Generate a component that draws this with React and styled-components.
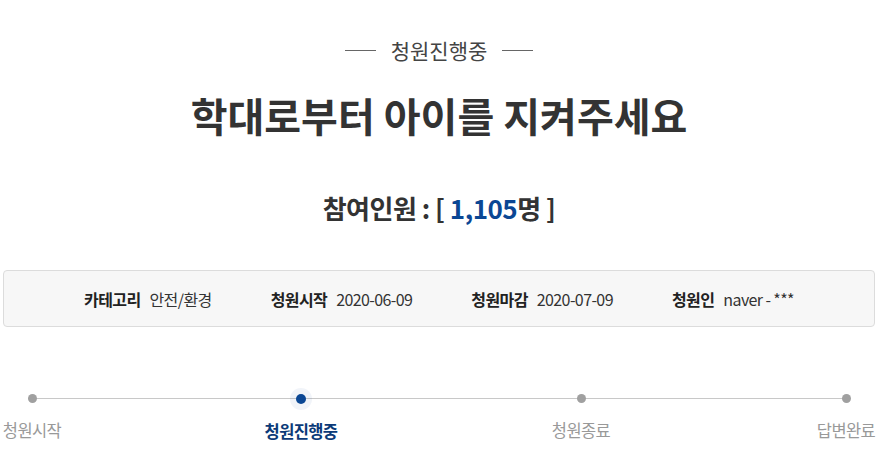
import styled, { createGlobalStyle } from "styled-components";

const GlobalStyle = createGlobalStyle`
  body {
    margin: 0;
    background: #fff;
    font-family: "Noto Sans CJK KR", "Noto Sans", sans-serif;
    color: #333;
  }
`;

const Page = styled.div`
  width: 872px;
  margin-left: 3px;
  padding-top: 32px;
`;

const Status = styled.div`
  display: flex;
  align-items: center;
  justify-content: center;
  gap: 15px;
  font-size: 21px;
  line-height: 36px;
  color: #444;

  &::before,
  &::after {
    content: "";
    width: 31px;
    height: 1px;
    background: #666;
  }
`;

const Title = styled.h1`
  margin: 19px 0 0;
  text-align: center;
  font-size: 40px;
  line-height: 56px;
  font-weight: 700;
  color: #333;
`;

const Count = styled.div`
  margin-top: 47px;
  text-align: center;
  font-size: 26px;
  line-height: 36px;
  font-weight: 700;
  color: #333;
  letter-spacing: -0.5px;
`;

const Num = styled.span`
  color: #0b4794;
`;

const InfoBox = styled.div`
  margin-top: 44px;
  height: 55px;
  display: flex;
  align-items: center;
  justify-content: center;
  gap: 59px;
  background: #f7f7f7;
  border: 1px solid #dcdcdc;
  border-radius: 4px;
  font-size: 16px;
  letter-spacing: -0.6px;
`;

const InfoItem = styled.div`
  display: flex;
  gap: 9px;
  color: #333;
`;

const InfoLabel = styled.span`
  font-weight: 700;
  color: #222;
`;

const Steps = styled.div`
  margin-top: 59px;
  display: grid;
  grid-template-columns: 58px 211fr 58px 222fr 58px 207fr 58px;
  position: relative;
`;

const Track = styled.div`
  position: absolute;
  left: 29px;
  right: 29px;
  top: 12px;
  height: 1px;
  background: #c8c8c8;
`;

const Step = styled.div`
  grid-column: ${(p) => p.$col};
  display: flex;
  flex-direction: column;
  align-items: center;
  width: 58px;
  justify-self: center;
  position: relative;
`;

const Dot = styled.div`
  width: ${(p) => (p.$active ? 10 : 9)}px;
  height: ${(p) => (p.$active ? 10 : 9)}px;
  margin: 8px 0;
  border-radius: 50%;
  background: ${(p) => (p.$active ? "#0b4794" : "#a0a0a0")};
  box-shadow: ${(p) => (p.$active ? "0 0 0 6px rgba(11,71,148,0.06)" : "none")};
`;

const StepLabel = styled.div`
  margin-top: 8px;
  white-space: nowrap;
  font-size: 16.5px;
  line-height: 22px;
  letter-spacing: -0.6px;
  font-weight: ${(p) => (p.$active ? 700 : 400)};
  color: ${(p) => (p.$active ? "#0b3a78" : "#999")};
`;

const info = [
  ["카테고리", "안전/환경"],
  ["청원시작", "2020-06-09"],
  ["청원마감", "2020-07-09"],
  ["청원인", "naver - ***"],
];

const steps = [
  { label: "청원시작", col: 1 },
  { label: "청원진행중", col: 3, active: true },
  { label: "청원종료", col: 5 },
  { label: "답변완료", col: 7 },
];

export default function App() {
  return (
    <>
      <GlobalStyle />
      <Page>
        <Status>청원진행중</Status>
        <Title>학대로부터 아이를 지켜주세요</Title>
        <Count>
          참여인원 : [ <Num>1,105</Num>명 ]
        </Count>
        <InfoBox>
          {info.map(([k, v]) => (
            <InfoItem key={k}>
              <InfoLabel>{k}</InfoLabel>
              <span>{v}</span>
            </InfoItem>
          ))}
        </InfoBox>
        <Steps>
          <Track />
          {steps.map((s) => (
            <Step key={s.label} $col={s.col}>
              <Dot $active={s.active} />
              <StepLabel $active={s.active}>{s.label}</StepLabel>
            </Step>
          ))}
        </Steps>
      </Page>
    </>
  );
}
